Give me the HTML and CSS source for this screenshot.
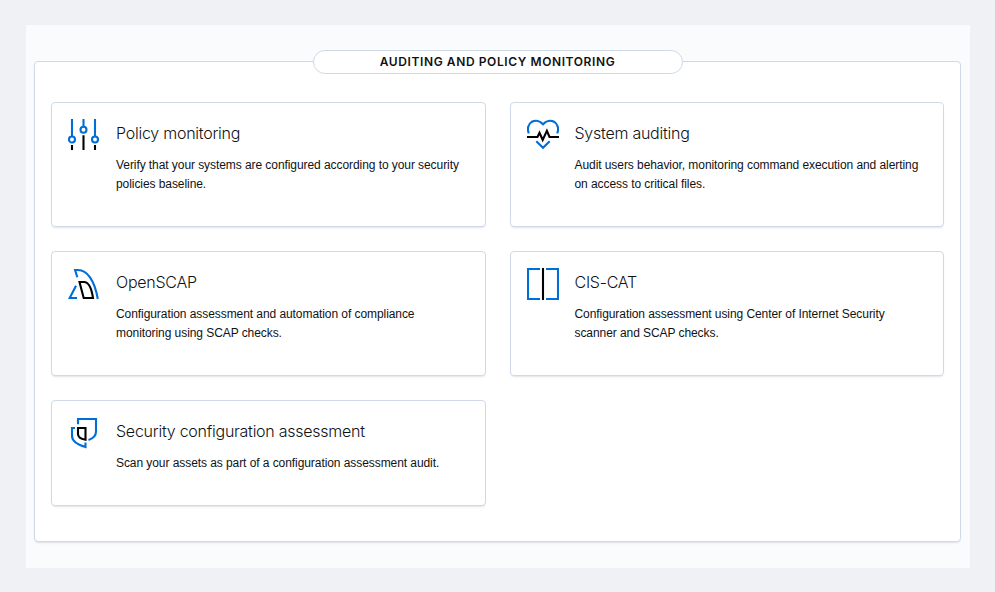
FILE: index.html
```html
<!DOCTYPE html>
<html lang="en">
<head>
<meta charset="utf-8">
<title>Auditing and policy monitoring</title>
<link rel="stylesheet" href="styles.css">
</head>
<body>
<main class="page">
  <section class="panel">
    <h2 class="panel-title">Auditing and Policy Monitoring</h2>
    <div class="grid">
      <article class="card">
        <svg class="icon" viewBox="0 0 32 32"><path d="M4 0v17.500M15.500 0v8M27 0v17.500"/><circle cx="4" cy="20.500" r="3"/><circle cx="15.500" cy="10.700" r="3"/><circle cx="27" cy="20.500" r="3"/><path class="dark" d="M4 26v5M15.500 16.300V31M27 26v5"/></svg>
        <div class="body"><h3 class="name">Policy monitoring</h3><p class="text">Verify that your systems are configured according to your security policies baseline.</p></div>
      </article>
      <article class="card">
        <svg class="icon" viewBox="0 0 32 32"><path d="M1.800 14.300C-.2 9.500 1.500 5 4.500 3 8.500.7 13 1.700 16 5.200 19 1.700 23.500.700 27.500 3c3 2 4.700 6.500 2.700 11.300M9.300 22.300l6.700 6.500 6.700-6.500"/><path class="dark" d="M0 18h10.500l2-4.200 3.200 7.200 4.200-9.200 2.600 6.200H32"/></svg>
        <div class="body"><h3 class="name">System auditing</h3><p class="text">Audit users behavior, monitoring command execution and alerting on access to critical files.</p></div>
      </article>
      <article class="card">
        <svg class="icon" viewBox="0 0 32 32"><path d="M9.300 9.300L7.100 2H10c9 0 16.500 10 19.800 29M8 17.700L1.700 30H9"/><path class="dark" d="M11.500 14H16c4.500 0 7.500 6 9 16h-9.300z"/></svg>
        <div class="body"><h3 class="name">OpenSCAP</h3><p class="text">Configuration assessment and automation of compliance monitoring using SCAP checks.</p></div>
      </article>
      <article class="card">
        <svg class="icon" viewBox="0 0 32 32"><path d="M13 1H1v30h12M19 1h12v30H19"/><path class="dark" d="M16 0v32"/></svg>
        <div class="body"><h3 class="name">CIS-CAT</h3><p class="text">Configuration assessment using Center of Internet Security scanner and SCAP checks.</p></div>
      </article>
      <article class="card">
        <svg class="icon" viewBox="0 0 32 32"><path d="M10 7.300V2h18v12.500c0 4-3 7-7.500 8.500M7 11H4v8c0 5 5 8.500 13.500 11v-4.500"/><path class="dark" d="M10 11h7.500v11.800C13 22 10 20 10 17z"/></svg>
        <div class="body"><h3 class="name">Security configuration assessment</h3><p class="text">Scan your assets as part of a configuration assessment audit.</p></div>
      </article>
    </div>
  </section>
</main>
</body>
</html>
```
FILE: styles.css
```css
* { box-sizing: border-box; }
body {
  margin: 0;
  padding: 25px 25px 24px 26px;
  background: #f0f1f5;
  color: #101216;
  font-family: Inter, "Liberation Sans", sans-serif;
}
.page {
  height: 543px;
  padding: 36px 9px 0 8px;
  background: #fafbfd;
}
.panel {
  height: 481px;
  padding: 0 16px;
  background: #fff;
  border: 1px solid #cfdae8;
  border-radius: 4px;
  box-shadow: 0 2px 2px -1px rgba(152, 162, 179, .3);
}
.panel-title {
  width: 370px;
  height: 24px;
  margin: -12px auto 28px;
  background: #fff;
  border: 1px solid #cfdae8;
  border-radius: 12px;
  font-size: 12px;
  font-weight: 600;
  line-height: 22px;
  letter-spacing: .6px;
  text-align: center;
  text-transform: uppercase;
}
.grid {
  display: grid;
  grid-template-columns: 1fr 1fr;
  grid-template-rows: 125px 125px 106px;
  gap: 24px;
}
.card {
  display: flex;
  gap: 16px;
  padding: 16px;
  background: #fff;
  border: 1px solid #cfdae8;
  border-radius: 4px;
  box-shadow: 0 2px 2px -1px rgba(152, 162, 179, .3);
}
.icon {
  flex: none;
  width: 32px;
  height: 32px;
  fill: none;
  stroke: #006dd9;
  stroke-width: 2.1;
}
.icon .dark { stroke: #000; }
.name {
  margin: 2px 0 11px;
  font-size: 16px;
  font-weight: 300;
  line-height: 24px;
  letter-spacing: -.25px;
}
.text {
  margin: 0;
  font-family: "Liberation Sans", Arial, sans-serif;
  font-size: 12px;
  line-height: 19px;
  letter-spacing: -.07px;
}
```
